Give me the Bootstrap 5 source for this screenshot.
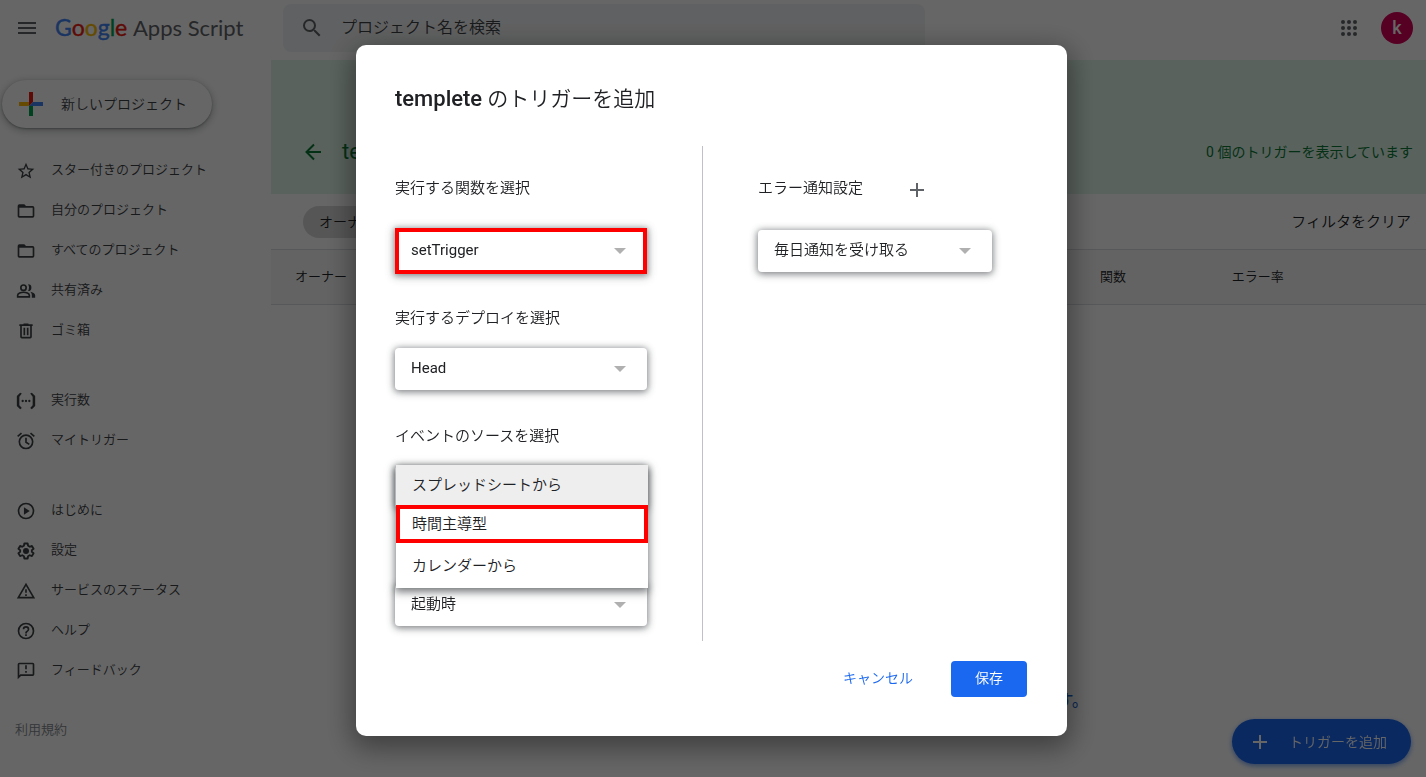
<!DOCTYPE html>
<html lang="ja">
<head>
<meta charset="utf-8">
<meta name="viewport" content="width=device-width, initial-scale=1">
<title>Google Apps Script</title>
<link href="https://cdn.jsdelivr.net/npm/bootstrap@5.3.0/dist/css/bootstrap.min.css" rel="stylesheet">
<style>
  body { font-family: Roboto, "Noto Sans CJK JP", sans-serif; font-weight: 350; font-size: 13px; line-height: 20px; color: #202124; background: #fff; min-height: 100vh; overflow: hidden; }
  button, select, input { font-weight: 350; color: #202124; }
  .topbar { height: 60px; padding: 0 13px 4px 16px; }
  .icon-btn { border: 0; background: none; padding: 0; line-height: 0; color: #5f6368; }
  .brand-logo { width: 228px; margin-left: 17px; font-family: Lato, sans-serif; font-weight: 400; font-size: 22px; fill: #5f6368; }
  .brand-logo .brand-google { font-size: 23px; }
  .search-bar { width: 642px; height: 48px; background: #f1f3f4; border-radius: 8px; padding: 0 17px; gap: 17px; color: #5f6368; }
  .search-bar input { border: 0; background: none; font-size: 16px; color: #202124; padding: 0; flex: 1; }
  .search-bar input::placeholder { color: #3c4043; opacity: 1; }
  .avatar { width: 32px; height: 32px; background: #d8005a; color: #fff; font-size: 18px; font-weight: 500; }
  .side { width: 271px; padding-top: 20px; flex: none; }
  .new-btn { width: 210px; height: 48px; margin: 0 0 22px 2px; border: 0; border-radius: 24px; background: #fff; box-shadow: 0 1px 2px rgba(60,64,67,.4), 0 2px 6px 2px rgba(60,64,67,.25); padding: 0 16px; gap: 17px; font-size: 14px; color: #3c4043; }
  .side-link { height: 40px; padding-left: 16px; gap: 15px; color: #3c4043; text-decoration: none; }
  .side-link svg { margin-top: 2px; }
  .side-group { margin-bottom: 30px; }
  .terms { margin-left: 15px; color: #80868b; text-decoration: none; }
  .banner { height: 134px; background: #e0f6ea; padding: 0 13px 30px 32px; color: #0b7a36; }
  .banner h1 { font-size: 22px; line-height: 24px; font-weight: 400; margin: 0 0 0 19px; }
  .banner p { font-size: 14px; line-height: 24px; font-weight: 400; }
  .filters { height: 55px; padding: 0 15px 0 32px; }
  .chip { height: 32px; border: 0; border-radius: 16px; background: #d8d8d8; padding: 0 16px; font-size: 14px; }
  .clear-btn { border: 0; background: none; padding: 0; font-size: 15px; }
  .trigger-table { width: 100%; table-layout: fixed; border-top: 1px solid #dadce0; border-bottom: 1px solid #dadce0; background: #f8f8f8; }
  .trigger-table th { height: 55px; font-weight: 350; padding: 0 0 0 24px; }
  .empty-link { display: block; width: 817px; text-align: right; margin-top: 386px; font-size: 16px; font-weight: 500; color: #1967d2; text-decoration: none; }
  .add-btn { position: fixed; right: 15px; bottom: 13px; width: 179px; height: 45px; border: 0; border-radius: 23px; background: #1a67f0; color: #fff; font-size: 14px; padding: 0 24px 0 16px; box-shadow: 0 2px 5px rgba(26,103,240,.6); }
  .scrim { position: fixed; inset: 0; background: rgba(0,0,0,.6); overflow: auto; padding: 4px 3px 0 0; }
  .dialog { width: 711px; padding: 39px 40px 39px 39px; background: #fff; border-radius: 10px; box-shadow: 0 8px 28px 4px rgba(0,0,0,.4); font-size: 15px; }
  .dialog h2 { font-size: 21px; line-height: 30px; font-weight: 350; margin: 0 0 32px; }
  .dialog h2 strong { font-size: 22px; font-weight: 500; }
  .pane-left { width: 308px; height: 495px; border-right: 1px solid #c0c0c8; padding-top: 32px; }
  .pane-right { padding: 32px 0 0 55px; }
  .field-label { display: block; height: 20px; }
  .field-block { margin-bottom: 36px; }
  .field-block .field-label { margin-bottom: 20px; }
  .field-block.is-first { margin-bottom: 34px; }
  .field-block.is-first .field-label { margin-bottom: 30px; }
  .field-block.is-source { margin-bottom: 76px; }
  .pick { position: relative; width: 252px; height: 42px; }
  .pick select { appearance: none; display: block; width: 100%; height: 100%; border: 0; border-radius: 4px; background: #fff; padding: 0 16px 2px; font-size: 15px; box-shadow: 0 1px 6px 1px rgba(60,64,67,.5), 0 2px 10px rgba(60,64,67,.25); }
  .pick .latin { font-weight: 400; }
  .pick::after { content: ""; position: absolute; right: 21px; top: 18px; border: 6px solid transparent; border-top-color: #b0b0b0; border-bottom: 0; }
  .pick-marked { height: 46px; }
  .pick-marked::after { top: 20px; }
  .pick-marked select { border: 4px solid #f00; border-radius: 0; padding: 0 12px 2px; }
  .pick-wide { width: 234px; margin-top: 32px; }
  .add-notify { margin-left: 46px; }
  .option-menu { position: absolute; left: 1px; top: -1px; width: 252px; background: #fff; box-shadow: 0 3px 8px 1px rgba(60,64,67,.7); z-index: 2; }
  .option-menu button { display: block; width: 100%; border: 0; background: #fff; padding: 0 16px; text-align: left; height: 45px; }
  .option-menu .is-current { background: #eee; height: 40px; }
  .option-menu .is-marked { border: 4px solid #f00; height: 38px; padding: 0 12px; }
  .dialog-actions { margin-top: 20px; gap: 38px; }
  .cancel-btn { border: 0; background: none; color: #1a67f0; font-size: 14px; padding: 0 0 2px; }
  .save-btn { width: 76px; height: 36px; border: 0; border-radius: 4px; background: #1a67f0; color: #fff; font-size: 14px; padding: 0 0 2px; }
</style>
</head>
<body>
<header class="topbar d-flex align-items-center">
  <button class="icon-btn" aria-label="メニュー"><svg width="22" height="20" viewBox="0 0 22 20" fill="currentColor"><path d="M2 4h18v2H2zm0 5h18v2H2zm0 5h18v2H2z"/></svg></button>
  <svg class="brand-logo" height="36" viewBox="0 0 228 36" role="img" aria-label="Google Apps Script"><text class="brand-google" x="0" y="26" stroke-width="0.400"><tspan fill="#4285f4" stroke="#4285f4">G</tspan><tspan fill="#ea1a10" stroke="#ea1a10">o</tspan><tspan fill="#fbbc04" stroke="#fbbc04">o</tspan><tspan fill="#4285f4" stroke="#4285f4">g</tspan><tspan fill="#00a650" stroke="#00a650">l</tspan><tspan fill="#ea1a10" stroke="#ea1a10">e</tspan></text><text x="78" y="26">Apps Script</text></svg>
  <label class="search-bar d-flex align-items-center">
    <svg width="24" height="24" viewBox="0 0 24 24" fill="currentColor"><path d="M15.5 14h-.79l-.28-.27A6.47 6.47 0 0 0 16 9.5 6.5 6.5 0 1 0 9.5 16c1.61 0 3.09-.59 4.23-1.57l.27.28v.79l5 4.99L20.49 19zm-6 0a4.5 4.5 0 1 1 0-9 4.5 4.5 0 0 1 0 9z"/></svg>
    <input type="text" placeholder="プロジェクト名を検索" aria-label="プロジェクト名を検索">
  </label>
  <button class="icon-btn ms-auto me-4" aria-label="アプリ"><svg width="16" height="16" viewBox="0 0 16 16" fill="currentColor"><g id="dots"><circle cx="2" cy="2" r="2"/><circle cx="8" cy="2" r="2"/><circle cx="14" cy="2" r="2"/></g><use href="#dots" y="6"/><use href="#dots" y="12"/></svg></button>
  <button class="icon-btn avatar text-white rounded-circle" aria-label="アカウント">k</button>
</header>
<div class="d-flex">
  <nav class="side">
    <button class="new-btn d-flex align-items-center"><svg width="26" height="26" viewBox="0 0 26 26"><path fill="#ea1a10" d="M11 1h4v10l-4 4z"/><path fill="#fbbc04" d="M1 11h10v4H1z"/><path fill="#00a650" d="M11 15h4v10h-4z"/><path fill="#4285f4" d="M15 11h10v4H11z"/></svg>新しいプロジェクト</button>
    <div class="side-group">
      <a class="side-link d-flex align-items-center" href="#"><svg width="20" height="20" viewBox="0 0 24 24" fill="currentColor"><path d="M22 9.24l-7.19-.62L12 2 9.19 8.63 2 9.24l5.46 4.73L5.82 21 12 17.27 18.18 21l-1.63-7.03zM12 15.4l-3.76 2.27 1-4.28-3.32-2.88 4.38-.38L12 6.1l1.71 4.04 4.38.38-3.32 2.88 1 4.28z"/></svg>スター付きのプロジェクト</a>
      <a class="side-link d-flex align-items-center" href="#"><svg width="20" height="20" viewBox="0 0 24 24" fill="currentColor"><path d="M20 6h-8l-2-2H4a2 2 0 0 0-2 2v12c0 1.100.9 2 2 2h16a2 2 0 0 0 2-2V8a2 2 0 0 0-2-2zm0 12H4V8h16z"/></svg>自分のプロジェクト</a>
      <a class="side-link d-flex align-items-center" href="#"><svg width="20" height="20" viewBox="0 0 24 24" fill="currentColor"><path d="M20 6h-8l-2-2H4a2 2 0 0 0-2 2v12c0 1.100.9 2 2 2h16a2 2 0 0 0 2-2V8a2 2 0 0 0-2-2zm0 12H4V8h16z"/></svg>すべてのプロジェクト</a>
      <a class="side-link d-flex align-items-center" href="#"><svg width="20" height="20" viewBox="0 0 24 24"><g fill="none" stroke="currentColor" stroke-width="2"><circle cx="9" cy="8" r="3.200"/><path d="M2 19v-2c0-2 4-3.500 7-3.500s7 1.500 7 3.500v2z"/></g><path fill="currentColor" d="M14.500 4a4 4 0 0 1 0 8c1.500-2.500 1.500-5.500 0-8zM17 13c3 .5 6 1.800 6 4.200V20h-4v-3c0-1.600-.8-3-2-4z"/></svg>共有済み</a>
      <a class="side-link d-flex align-items-center" href="#"><svg width="20" height="20" viewBox="0 0 24 24" fill="currentColor"><path d="M15 4V3H9v1H4v2h1v13a2 2 0 0 0 2 2h10a2 2 0 0 0 2-2V6h1V4zm2 15H7V6h10zM9 8h2v9H9zm4 0h2v9h-2z"/></svg>ゴミ箱</a>
    </div>
    <div class="side-group">
      <a class="side-link d-flex align-items-center" href="#"><svg width="20" height="20" viewBox="0 0 24 24" fill="currentColor"><path d="M7 3L5 2 1 6v12l4 4 2-1.500L4 17V7zM17 3l2-1 4 4v12l-4 4-2-1.500 3-3.500V7z"/><circle cx="8" cy="12" r="1.400"/><circle cx="12" cy="12" r="1.400"/><circle cx="16" cy="12" r="1.400"/></svg>実行数</a>
      <a class="side-link d-flex align-items-center" href="#"><svg width="20" height="20" viewBox="0 0 24 24" fill="none" stroke="currentColor" stroke-width="2"><circle cx="12" cy="13" r="8"/><path d="M12 8v5.500l4 2.500M2 6.500l4.600-3.900M22 6.500l-4.600-3.900"/></svg>マイトリガー</a>
    </div>
    <div class="side-group">
      <a class="side-link d-flex align-items-center" href="#"><svg width="20" height="20" viewBox="0 0 24 24"><circle cx="12" cy="12" r="9" fill="none" stroke="currentColor" stroke-width="2"/><path fill="currentColor" d="M9.500 7.500l7 4.500-7 4.500z"/></svg>はじめに</a>
      <a class="side-link d-flex align-items-center" href="#"><svg width="20" height="20" viewBox="0 0 24 24"><path fill="none" stroke="currentColor" stroke-width="2.200" stroke-linejoin="round" d="M10 3h4l.5 2.700 2 1.200 2.600-1 2 3.400-2.100 1.700v2l2.100 1.700-2 3.400-2.600-1-2 1.200L14 21h-4l-.5-2.700-2-1.200-2.600 1-2-3.400L5 13v-2L2.900 9.300l2-3.400 2.600 1 2-1.200z"/><circle cx="12" cy="12" r="3.600" fill="currentColor"/></svg>設定</a>
      <a class="side-link d-flex align-items-center" href="#"><svg width="20" height="20" viewBox="0 0 24 24" fill="currentColor"><path d="M12 5.990L19.530 19H4.470L12 5.990M12 2L1 21h22zm1 14h-2v2h2zm0-6h-2v4h2z"/></svg>サービスのステータス</a>
      <a class="side-link d-flex align-items-center" href="#"><svg width="20" height="20" viewBox="0 0 24 24" fill="currentColor"><path d="M11 18h2v-2h-2zm1-16a10 10 0 1 0 0 20 10 10 0 0 0 0-20zm0 18a8 8 0 1 1 0-16 8 8 0 0 1 0 16zm0-14a4 4 0 0 0-4 4h2a2 2 0 1 1 4 0c0 2-3 1.750-3 5h2c0-2.250 3-2.500 3-5a4 4 0 0 0-4-4z"/></svg>ヘルプ</a>
      <a class="side-link d-flex align-items-center" href="#"><svg width="20" height="20" viewBox="0 0 24 24" fill="currentColor"><path d="M20 2H4a2 2 0 0 0-2 2v18l4-4h14a2 2 0 0 0 2-2V4a2 2 0 0 0-2-2zm0 14H5.200L4 17.200V4h16zM11 12h2v2h-2zm0-7h2v5h-2z"/></svg>フィードバック</a>
    </div>
    <a class="terms" href="#">利用規約</a>
  </nav>
  <main class="flex-grow-1">
    <div class="banner d-flex align-items-end">
      <button class="icon-btn text-reset" aria-label="戻る"><svg width="20" height="24" viewBox="0 0 20 24" fill="none" stroke="currentColor" stroke-width="2"><path d="M18 12H3.500M11 4.500L3.500 12l7.500 7.500"/></svg></button>
      <h1>templete</h1>
      <p class="ms-auto mb-0">0 個のトリガーを表示しています</p>
    </div>
    <div class="filters d-flex align-items-center">
      <button class="chip">オーナー: 自分</button>
      <button class="clear-btn ms-auto">フィルタをクリア</button>
    </div>
    <table class="trigger-table">
      <colgroup><col style="width:23%"><col style="width:23%"><col style="width:23.700%"><col style="width:11.400%"><col></colgroup>
      <thead><tr><th>オーナー</th><th>前回の実行</th><th>イベント</th><th>関数</th><th>エラー率</th></tr></thead>
    </table>
    <a class="empty-link" href="#">新しいトリガーを作成します。</a>
  </main>
</div>
<button class="add-btn d-flex align-items-center justify-content-between"><svg width="24" height="24" viewBox="0 0 24 24"><path d="M12 5v14M5 12h14" stroke="#fff" stroke-width="2"/></svg>トリガーを追加</button>

<div class="scrim d-flex">
  <section class="dialog m-auto" role="dialog" aria-modal="true" aria-labelledby="dialog-title">
    <h2 id="dialog-title"><strong>templete</strong> のトリガーを追加</h2>
    <div class="d-flex">
      <div class="pane-left">
        <div class="field-block is-first">
          <label class="field-label" for="fn">実行する関数を選択</label>
          <div class="pick pick-marked"><select id="fn" class="latin"><option>setTrigger</option></select></div>
        </div>
        <div class="field-block">
          <label class="field-label" for="deploy">実行するデプロイを選択</label>
          <div class="pick"><select id="deploy" class="latin"><option>Head</option></select></div>
        </div>
        <div class="field-block is-source">
          <label class="field-label" for="source">イベントのソースを選択</label>
          <div class="pick"><select id="source"><option>スプレッドシートから</option></select>
            <div class="option-menu" role="listbox">
              <button class="is-current" role="option">スプレッドシートから</button>
              <button class="is-marked" role="option">時間主導型</button>
              <button role="option">カレンダーから</button>
            </div>
          </div>
        </div>
        <div class="pick"><select aria-label="イベントの種類を選択"><option>起動時</option></select></div>
      </div>
      <div class="pane-right">
        <div class="d-flex align-items-center"><label class="field-label" for="notify">エラー通知設定</label><button class="icon-btn add-notify" aria-label="追加"><svg width="16" height="20" viewBox="0 0 16 20"><path d="M8 5v14M1 12h14" stroke="#5f6368" stroke-width="2"/></svg></button></div>
        <div class="pick pick-wide"><select id="notify"><option>毎日通知を受け取る</option></select></div>
      </div>
    </div>
    <div class="dialog-actions d-flex justify-content-end align-items-center"><button class="cancel-btn">キャンセル</button><button class="save-btn">保存</button></div>
  </section>
</div>
<script src="https://cdn.jsdelivr.net/npm/bootstrap@5.3.0/dist/js/bootstrap.bundle.min.js"></script>
</body>
</html>
